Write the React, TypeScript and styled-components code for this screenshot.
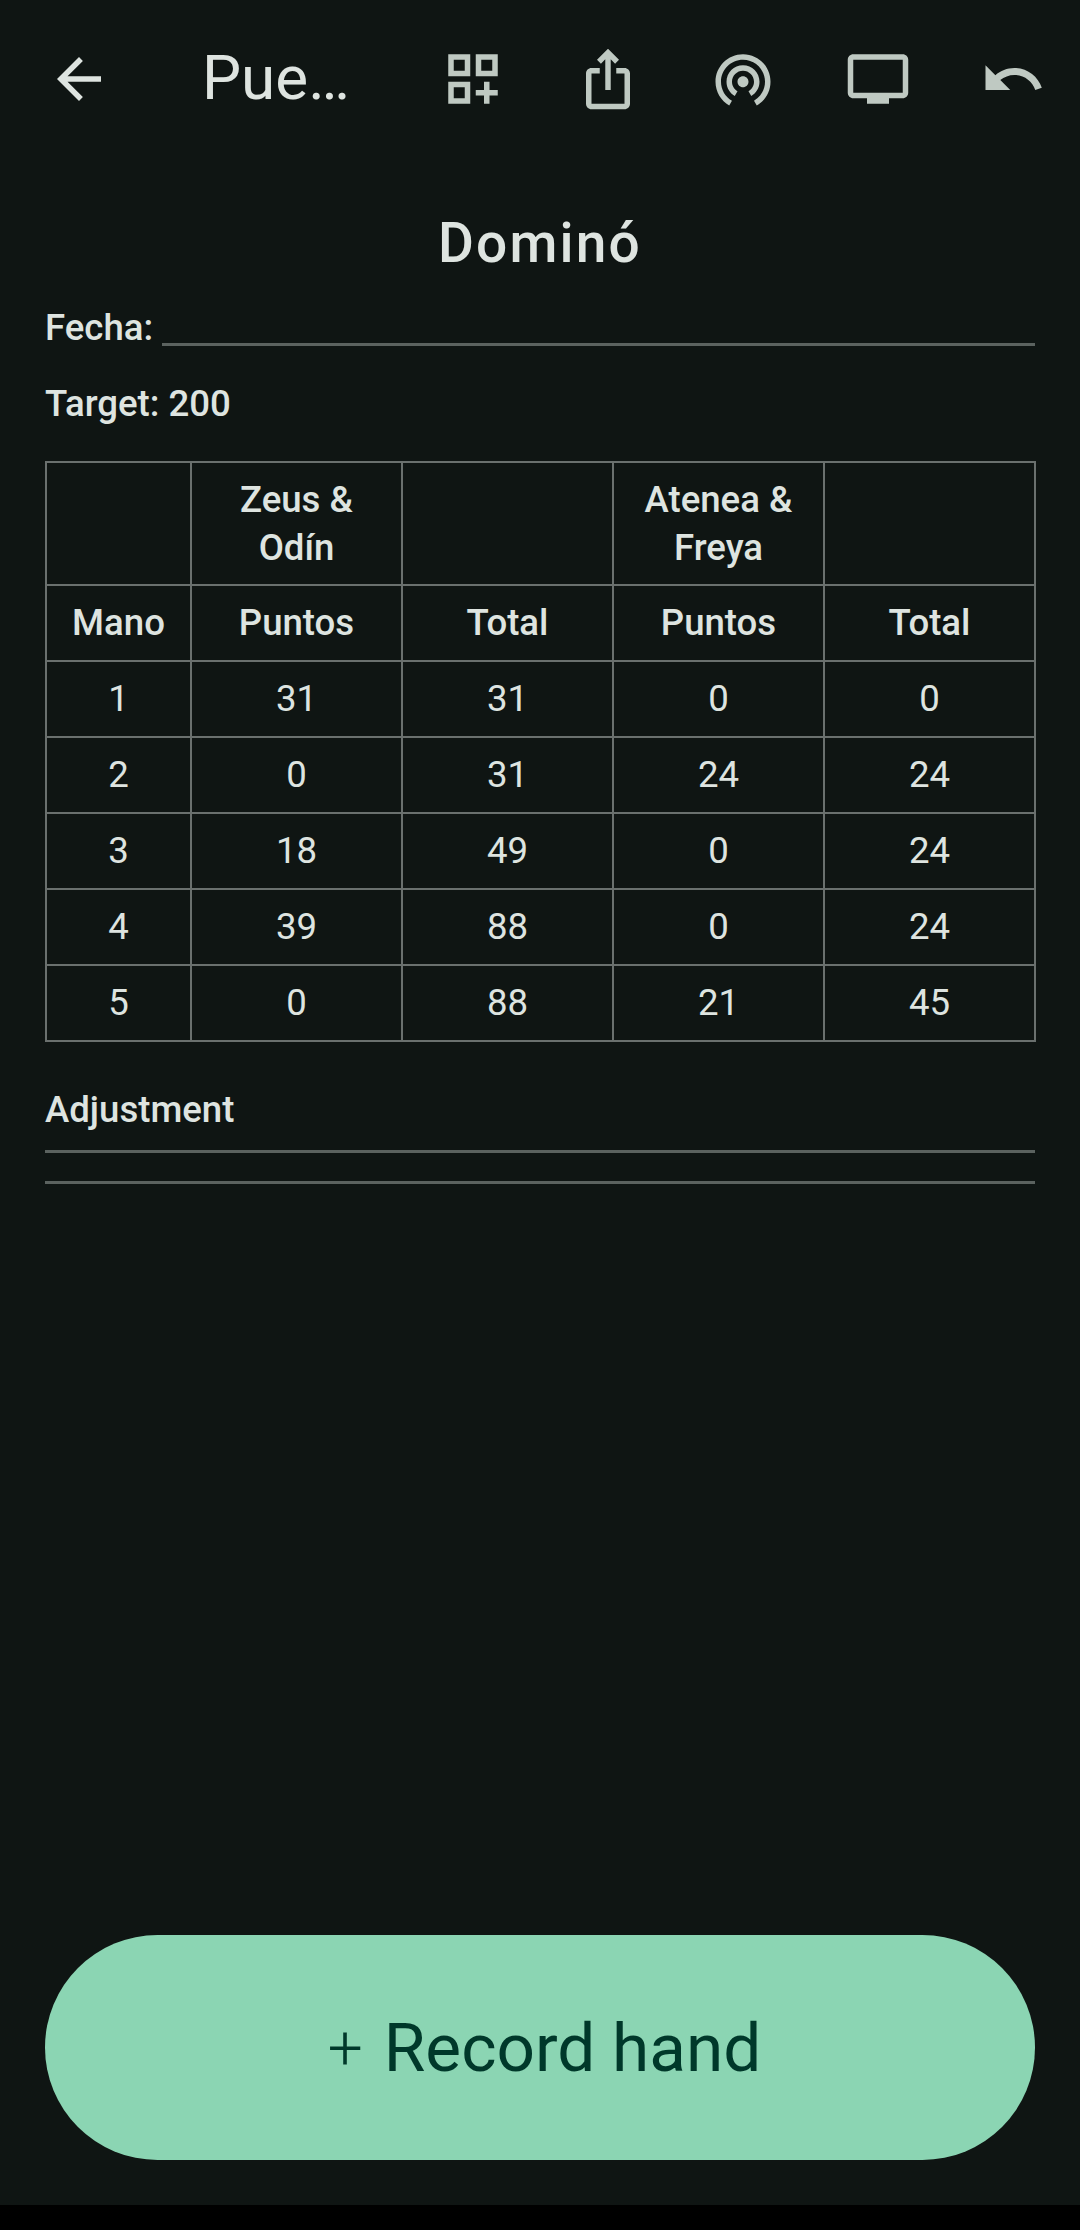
import React from 'react'
import styled, { createGlobalStyle } from 'styled-components'

const GlobalStyle = createGlobalStyle`
  html, body {
    margin: 0;
    padding: 0;
    background: #000;
    font-family: Roboto, "Noto Sans", sans-serif;
  }
`

const ICONS = {
  back: 'M20 11H7.83l5.59-5.59L12 4l-8 8 8 8 1.41-1.41L7.83 13H20v-2z',
  addGrid: 'M3 11h8V3H3v8zm2-6h4v4H5V5zm8-2v8h8V3h-8zm6 6h-4V5h4v4zM3 21h8v-8H3v8zm2-6h4v4H5v-4zm13-2h-2v3h-3v2h3v3h2v-3h3v-2h-3z',
  share: 'M16 5l-1.42 1.42-1.59-1.59V16h-1.98V4.83L9.42 6.42 8 5l4-4 4 4zm4 5v11c0 1.1-.9 2-2 2H6c-1.11 0-2-.9-2-2V10c0-1.11.89-2 2-2h3v2H6v11h12V10h-3V8h3c1.1 0 2 .89 2 2z',
  tethering: 'M12 11c-1.1 0-2 .9-2 2s.9 2 2 2 2-.9 2-2-.9-2-2-2zm6 2c0-3.31-2.69-6-6-6s-6 2.69-6 6c0 2.22 1.21 4.15 3 5.19l1-1.74c-1.19-.7-2-1.97-2-3.45 0-2.21 1.79-4 4-4s4 1.79 4 4c0 1.48-.81 2.75-2 3.45l1 1.74c1.79-1.04 3-2.97 3-5.19zM12 3C6.48 3 2 7.48 2 13c0 3.7 2.01 6.92 4.99 8.65l1-1.73C5.61 18.53 4 15.96 4 13c0-4.42 3.58-8 8-8s8 3.58 8 8c0 2.96-1.61 5.53-4 6.92l1 1.73c2.99-1.73 5-4.95 5-8.65 0-5.52-4.48-10-10-10z',
  tv: 'M21 3H3c-1.1 0-2 .9-2 2v12c0 1.1.9 2 2 2h5v2h8v-2h5c1.1 0 1.99-.9 1.99-2L23 5c0-1.1-.9-2-2-2zm0 14H3V5h18v12z',
  undo: 'M12.5 8c-2.65 0-5.05.99-6.9 2.6L2 7v9h9l-3.62-3.62c1.39-1.16 3.16-1.88 5.12-1.88 3.54 0 6.55 2.31 7.6 5.5l2.37-.78C21.08 11.03 17.15 8 12.5 8z',
}

const ACTIONS = [ICONS.addGrid, ICONS.share, ICONS.tethering, ICONS.tv, ICONS.undo]

const HANDS = [
  [1, 31, 31, 0, 0],
  [2, 0, 31, 24, 24],
  [3, 18, 49, 0, 24],
  [4, 39, 88, 0, 24],
  [5, 0, 88, 21, 45],
]

const Icon = ({ path }: { path: string }) => (
  <svg width="66" height="66" viewBox="0 0 24 24" fill="currentColor">
    <path d={path} />
  </svg>
)

export default function App() {
  return (
    <>
      <GlobalStyle />
      <Page>
        <Screen>
          <Toolbar>
            <BackButton>
              <Icon path={ICONS.back} />
            </BackButton>
            <Title>Pue…</Title>
            {ACTIONS.map((path) => (
              <ActionButton key={path}>
                <Icon path={path} />
              </ActionButton>
            ))}
          </Toolbar>
          <Content>
            <Heading>Dominó</Heading>
            <DateRow>
              <Label>Fecha:</Label>
              <DateLine />
            </DateRow>
            <Target>Target: 200</Target>
            <ScoreTable>
              <colgroup>
                <FirstCol />
                <ScoreCol />
                <ScoreCol />
                <ScoreCol />
                <ScoreCol />
              </colgroup>
              <thead>
                <TeamRow>
                  <HeadCell />
                  <HeadCell>Zeus &amp; Odín</HeadCell>
                  <HeadCell />
                  <HeadCell>Atenea &amp; Freya</HeadCell>
                  <HeadCell />
                </TeamRow>
                <Row>
                  <HeadCell>Mano</HeadCell>
                  <HeadCell>Puntos</HeadCell>
                  <HeadCell>Total</HeadCell>
                  <HeadCell>Puntos</HeadCell>
                  <HeadCell>Total</HeadCell>
                </Row>
              </thead>
              <tbody>
                {HANDS.map((hand) => (
                  <Row key={hand[0]}>
                    {hand.map((value, i) => (
                      <Cell key={i}>{value}</Cell>
                    ))}
                  </Row>
                ))}
              </tbody>
            </ScoreTable>
            <Adjustment>Adjustment</Adjustment>
            <Rule />
            <SecondRule />
          </Content>
          <RecordButton>
            <Plus>+</Plus>
            Record hand
          </RecordButton>
        </Screen>
      </Page>
    </>
  )
}

const Page = styled.div`
  width: 1080px;
  height: 2230px;
  background: #000;
  overflow: hidden;
`

const Screen = styled.div`
  height: 2205px;
  box-sizing: border-box;
  padding-bottom: 45px;
  background: #0f1513;
  display: flex;
  flex-direction: column;
`

const Toolbar = styled.header`
  height: 158px;
  display: flex;
  align-items: center;
  flex-shrink: 0;
`

const BackButton = styled.div`
  width: 158px;
  display: flex;
  justify-content: center;
  color: #dee4e0;
`

const Title = styled.div`
  flex: 1;
  padding-left: 44px;
  margin-top: -3px;
  font-size: 62px;
  font-weight: 400;
  color: #dee4e0;
  white-space: nowrap;
`

const ActionButton = styled.div`
  width: 135px;
  display: flex;
  justify-content: center;
  color: #bfc9c2;
`

const Content = styled.main`
  padding: 0 45px;
  color: #dee4e0;
`

const Heading = styled.h1`
  margin: 53px 0 0;
  font-size: 55px;
  line-height: 64px;
  font-weight: 500;
  letter-spacing: 2.2px;
  text-align: center;
`

const DateRow = styled.div`
  display: flex;
  align-items: flex-end;
  height: 48px;
  margin-top: 29px;
`

const Label = styled.span`
  font-size: 36.6px;
  line-height: 48px;
  font-weight: 500;
`

const DateLine = styled.div`
  flex: 1;
  height: 3px;
  margin: 0 0 6px 9px;
  background: #5b625f;
`

const Target = styled.div`
  margin-top: 28px;
  font-size: 36.6px;
  line-height: 48px;
  font-weight: 500;
`

const ScoreTable = styled.table`
  width: 989px;
  margin-top: 33px;
  border-collapse: collapse;
  table-layout: fixed;
  font-size: 36.6px;
  line-height: 48px;
  text-align: center;
`

const FirstCol = styled.col`
  width: 145px;
`

const ScoreCol = styled.col`
  width: 211px;
`

const Row = styled.tr`
  height: 76px;
`

const TeamRow = styled.tr`
  height: 123px;
`

const HeadCell = styled.th`
  padding: 0 20px;
  border: 2px solid #6a706e;
  font-weight: 500;
`

const Cell = styled.td`
  padding: 0;
  border: 2px solid #6a706e;
  font-weight: 400;
`

const Adjustment = styled.div`
  margin-top: 44px;
  font-size: 36.6px;
  line-height: 48px;
  font-weight: 500;
`

const Rule = styled.div`
  height: 3px;
  margin-top: 16px;
  background: #5b625f;
`

const SecondRule = styled(Rule)`
  margin-top: 28px;
`

const RecordButton = styled.button`
  flex-shrink: 0;
  height: 225px;
  margin: auto 45px 0;
  padding: 0 0 0 9px;
  border: none;
  border-radius: 113px;
  background: #8bd5b3;
  color: #00382a;
  font-family: inherit;
  font-size: 67.5px;
  display: flex;
  align-items: center;
  justify-content: center;
`

const Plus = styled.span`
  margin-right: 21px;
  font-size: 62px;
  font-weight: 300;
`
